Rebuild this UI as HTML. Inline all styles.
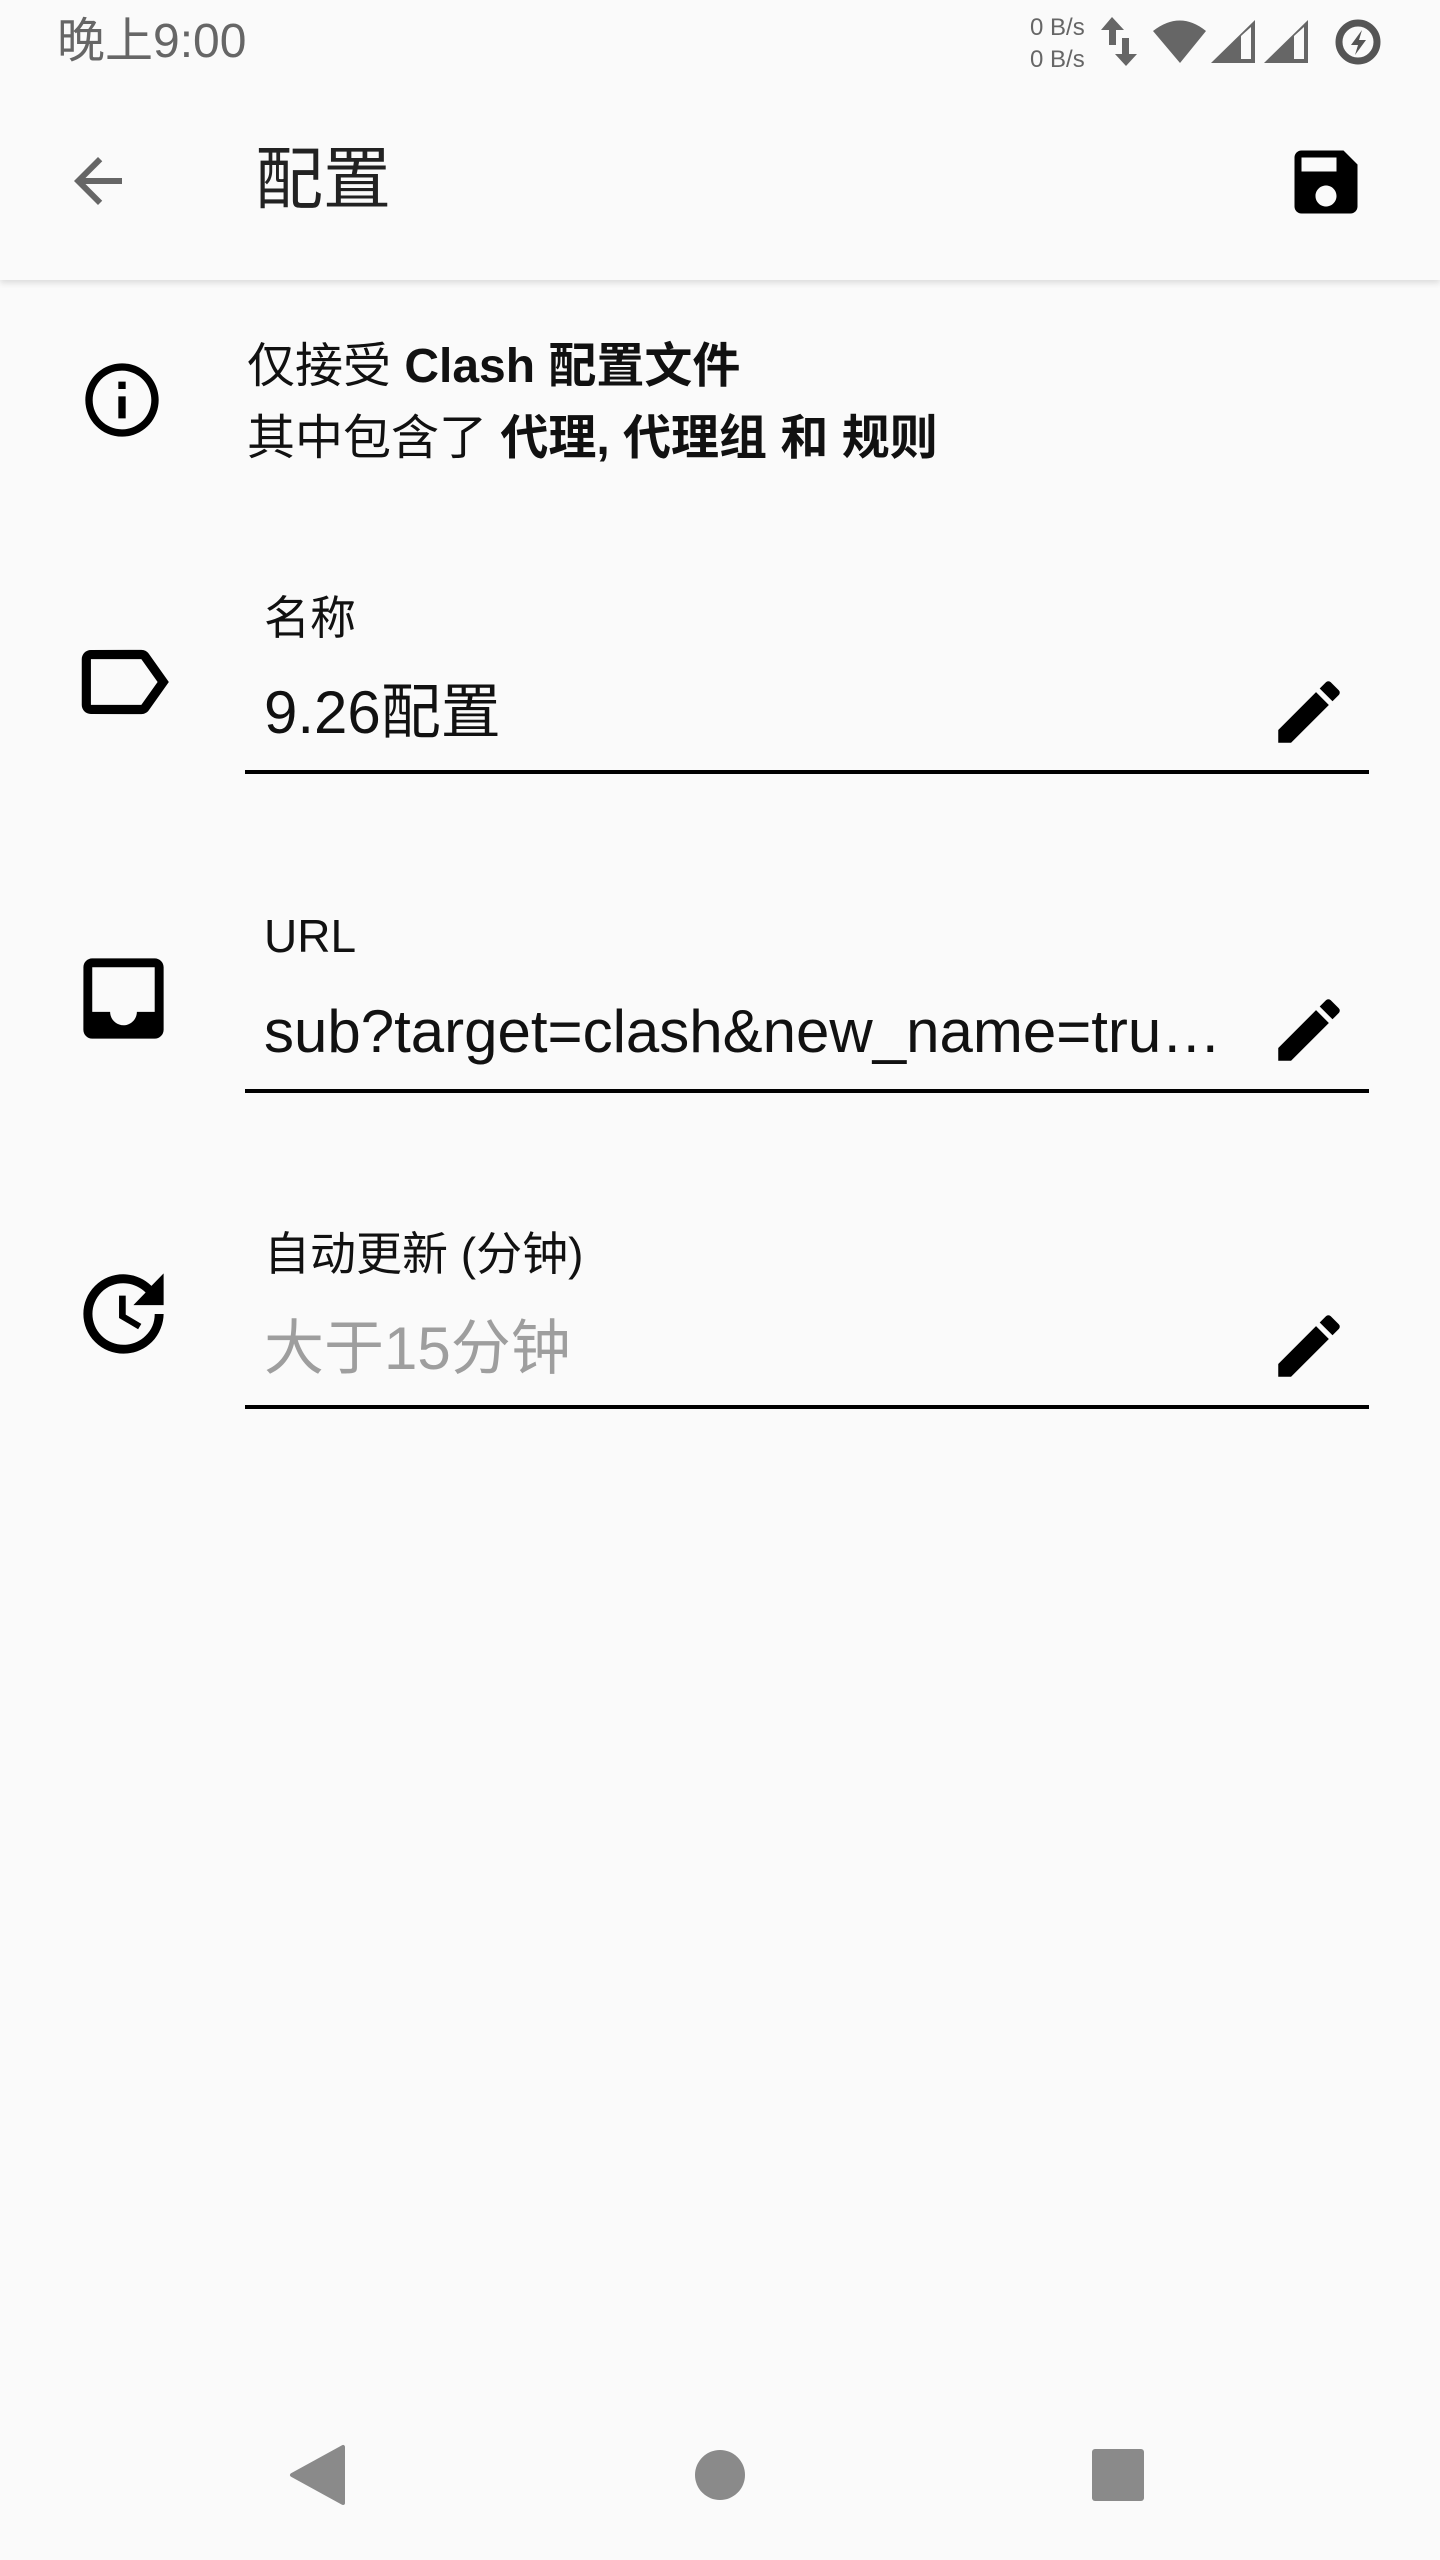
<!DOCTYPE html>
<html><head><meta charset="utf-8"><style>
*{margin:0;padding:0;box-sizing:border-box}
body{width:1440px;height:2560px;background:#fafafa;position:relative;overflow:hidden;font-family:"Liberation Sans","Noto Sans CJK SC",sans-serif;color:#000}
.a{position:absolute;white-space:nowrap}
.appbar{position:absolute;left:0;top:0;width:1440px;height:280px;background:#fafafa;box-shadow:0 3px 6px rgba(0,0,0,.12)}
.lbl{font-size:46px;line-height:1;color:#111}
.val{font-size:60px;line-height:1;color:#111}
.ul{position:absolute;left:245px;width:1124px;height:4px;background:#000}
</style></head><body>
<div class="appbar"></div>
<div class="a" style="left:57px;top:17px;font-size:48px;color:#666;line-height:50px">晚上9:00</div>
<div class="a" style="left:1030px;top:12px;font-size:24px;color:#666;line-height:32px">0 B/s<br>0 B/s</div>
<svg class="a" style="left:1095px;top:10px" width="345" height="65" viewBox="1095 10 345 65">
<path d="M1112 17 L1124 30 L1116 30 L1116 45 L1109 45 L1109 30 L1101 30Z M1122 38 L1129 38 L1129 54 L1137 54 L1126 66 L1115 54 L1122 54Z" fill="#666"/>
<path d="M1153 31 Q1180 10 1206 31 L1180 63Z" fill="#666"/>
<path d="M1211 63 L1255 20 L1255 63Z" fill="#666"/><path d="M1241 36 L1251 27 L1251 59 L1241 59Z" fill="#fafafa"/>
<path d="M1264 63 L1308 20 L1308 63Z" fill="#666"/><path d="M1294 36 L1304 27 L1304 59 L1294 59Z" fill="#fafafa"/>
<circle cx="1358" cy="42" r="19" fill="none" stroke="#555" stroke-width="7"/>
<path d="M1362 30 L1351 45 L1358 45 L1355 55 L1366 40 L1359 40Z" fill="#555"/>
</svg>
<svg class="a" style="left:62px;top:150px" width="72" height="62" viewBox="0 0 24 20"><path d="M20 11H7.83l5.59-5.59L12 4l-8 8 8 8 1.41-1.41L7.83 13H20v-2z" transform="translate(0,-2)" fill="#666"/></svg>
<div class="a" style="left:255px;top:145px;font-size:68px;line-height:70px;color:#222">配置</div>
<svg class="a" style="left:1284px;top:140px" width="84" height="84" viewBox="0 0 24 24"><path d="M17 3H5c-1.11 0-2 .9-2 2v14c0 1.1.89 2 2 2h14c1.1 0 2-.9 2-2V7l-4-4zm-5 16c-1.66 0-3-1.34-3-3s1.34-3 3-3 3 1.34 3 3-1.34 3-3 3zm3-10H5V5h10v4z" fill="#000"/></svg>

<svg class="a" style="left:78px;top:356px" width="88" height="88" viewBox="0 0 24 24"><path d="M11 7h2v2h-2zm0 4h2v6h-2zm1-9C6.48 2 2 6.48 2 12s4.48 10 10 10 10-4.48 10-10S17.52 2 12 2zm0 18c-4.41 0-8-3.59-8-8s3.59-8 8-8 8 3.59 8 8-3.59 8-8 8z" fill="#000"/></svg>
<div class="a" style="left:247px;top:331px;font-size:48px;line-height:72px;color:#111">仅接受 <b>Clash 配置文件</b><br>其中包含了 <b>代理, 代理组 和 规则</b></div>

<svg class="a" style="left:68px;top:627px" width="110" height="110" viewBox="0 0 24 24"><path d="M17.63 5.84C17.27 5.33 16.67 5 16 5L5 5.01C3.9 5.01 3 5.9 3 7v10c0 1.1.9 1.99 2 1.99L16 19c.67 0 1.27-.33 1.63-.84L22 12l-4.37-6.16zM16 17H5V7h11l3.55 5L16 17z" fill="#000"/></svg>
<div class="a lbl" style="left:264px;top:595px">名称</div>
<div class="a val" style="left:264px;top:683px">9.26配置</div>
<div class="ul" style="top:770px"></div>

<svg class="a" style="left:70px;top:945px" width="107" height="107" viewBox="0 0 24 24"><path d="M19 3H4.99C3.88 3 3.01 3.89 3.01 5L3 19c0 1.1.88 2 1.99 2H19c1.1 0 2-.9 2-2V5c0-1.11-.9-2-2-2zm0 12h-4c0 1.66-1.35 3-3 3s-3-1.34-3-3H4.99V5H19v10z" fill="#000"/></svg>
<div class="a lbl" style="left:264px;top:913px">URL</div>
<div class="a val" style="left:264px;top:1002px">sub?target=clash&amp;new_name=tru…</div>
<div class="ul" style="top:1089px"></div>

<svg class="a" style="left:70px;top:1260px" width="107" height="107" viewBox="0 0 24 24"><path d="M21 10.12h-6.78l2.74-2.82c-2.73-2.7-7.150-2.8-9.88-.1-2.73 2.71-2.73 7.08 0 9.79s7.15 2.71 9.88 0C18.32 15.65 19 14.08 19 12.1h2c0 1.98-.88 4.55-2.64 6.29-3.510 3.48-9.21 3.48-12.72 0-3.5-3.47-3.53-9.11-.02-12.58s9.14-3.47 12.65 0L21 3v7.12zM12.5 8v4.25l3.5 2.08-.72 1.21L11 13V8h1.5z" fill="#000"/></svg>
<div class="a lbl" style="left:264px;top:1231px">自动更新 (分钟)</div>
<div class="a val" style="left:264px;top:1319px;color:#9e9e9e">大于15分钟</div>
<div class="ul" style="top:1405px"></div>

<svg class="a" style="left:1268px;top:671px" width="82" height="82" viewBox="0 0 24 24"><path d="M3 17.25V21h3.75L17.81 9.940l-3.75-3.75L3 17.25zM20.71 7.04a1 1 0 0 0 0-1.41l-2.34-2.34a1 1 0 0 0-1.41 0l-1.83 1.83 3.75 3.75 1.83-1.83z" fill="#000"/></svg>
<svg class="a" style="left:1268px;top:989px" width="82" height="82" viewBox="0 0 24 24"><path d="M3 17.25V21h3.75L17.81 9.94l-3.75-3.75L3 17.25zM20.71 7.04a1 1 0 0 0 0-1.41l-2.34-2.34a1 1 0 0 0-1.41 0l-1.83 1.83 3.75 3.75 1.83-1.83z" fill="#000"/></svg>
<svg class="a" style="left:1268px;top:1305px" width="82" height="82" viewBox="0 0 24 24"><path d="M3 17.25V21h3.75L17.81 9.94l-3.75-3.75L3 17.25zM20.71 7.04a1 1 0 0 0 0-1.41l-2.34-2.34a1 1 0 0 0-1.41 0l-1.83 1.83 3.75 3.75 1.83-1.83z" fill="#000"/></svg>

<svg class="a" style="left:0;top:2420px" width="1440" height="110" viewBox="0 2420 1440 110">
<path d="M292 2475 L343 2447 L343 2503Z" fill="#8a8a8a" stroke="#8a8a8a" stroke-width="4" stroke-linejoin="round"/>
<circle cx="720" cy="2475" r="25" fill="#8a8a8a"/>
<rect x="1092" y="2449" width="52" height="52" rx="3" fill="#8a8a8a"/>
</svg>
</body></html>
